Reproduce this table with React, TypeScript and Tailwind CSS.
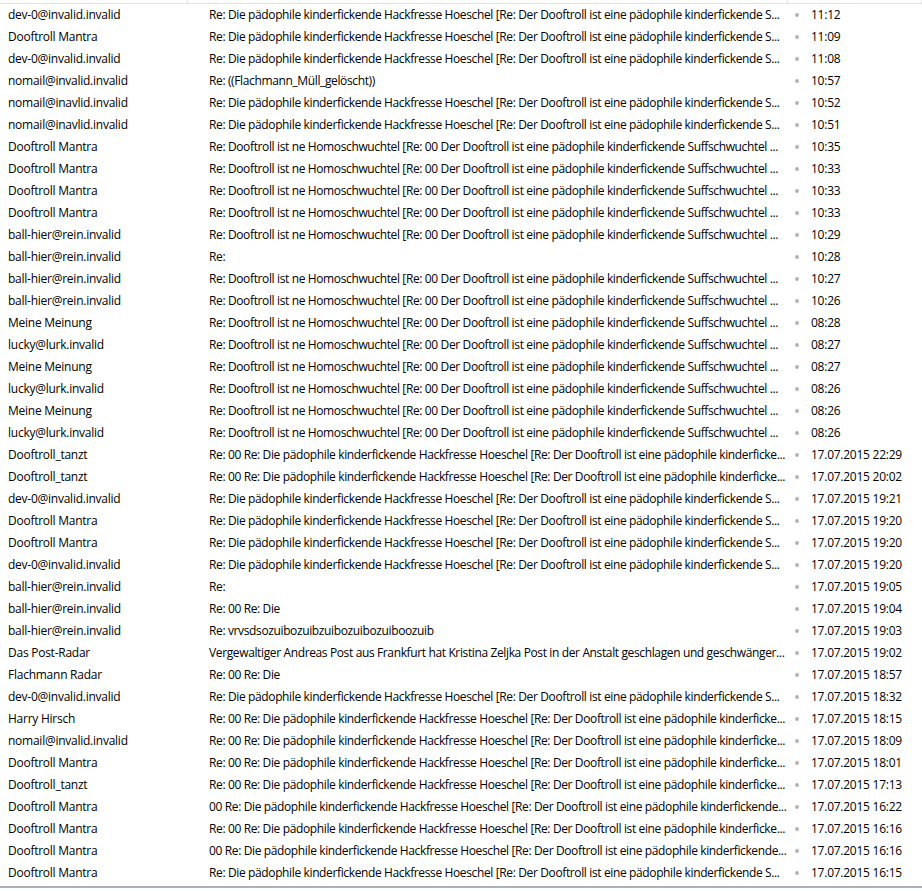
import React from 'react';

const A = 'Re: Die pädophile kinderfickende Hackfresse Hoeschel [Re: Der Dooftroll ist eine pädophile kinderfickende S...';
const B = 'Re: ((Flachmann_Müll_gelöscht))';
const C = 'Re: Dooftroll ist ne Homoschwuchtel [Re: 00 Der Dooftroll ist eine pädophile kinderfickende Suffschwuchtel ...';
const D = 'Re:';
const E = 'Re: 00 Re: Die pädophile kinderfickende Hackfresse Hoeschel [Re: Der Dooftroll ist eine pädophile kinderficke...';
const F = 'Re: 00 Re: Die';
const G = 'Re: vrvsdsozuibozuibzuibozuibozuiboozuib';
const H = 'Vergewaltiger Andreas Post aus Frankfurt hat Kristina Zeljka Post in der Anstalt geschlagen und geschwänger...';
const I = '00 Re: Die pädophile kinderfickende Hackfresse Hoeschel [Re: Der Dooftroll ist eine pädophile kinderfickende...';

const d = '17.07.2015 ';

const rows: [string, string, string][] = [
    ['dev-0@invalid.invalid', A, '11:12'],
    ['Dooftroll Mantra', A, '11:09'],
    ['dev-0@invalid.invalid', A, '11:08'],
    ['nomail@invalid.invalid', B, '10:57'],
    ['nomail@inavlid.invalid', A, '10:52'],
    ['nomail@inavlid.invalid', A, '10:51'],
    ['Dooftroll Mantra', C, '10:35'],
    ['Dooftroll Mantra', C, '10:33'],
    ['Dooftroll Mantra', C, '10:33'],
    ['Dooftroll Mantra', C, '10:33'],
    ['ball-hier@rein.invalid', C, '10:29'],
    ['ball-hier@rein.invalid', D, '10:28'],
    ['ball-hier@rein.invalid', C, '10:27'],
    ['ball-hier@rein.invalid', C, '10:26'],
    ['Meine Meinung', C, '08:28'],
    ['lucky@lurk.invalid', C, '08:27'],
    ['Meine Meinung', C, '08:27'],
    ['lucky@lurk.invalid', C, '08:26'],
    ['Meine Meinung', C, '08:26'],
    ['lucky@lurk.invalid', C, '08:26'],
    ['Dooftroll_tanzt', E, d + '22:29'],
    ['Dooftroll_tanzt', E, d + '20:02'],
    ['dev-0@invalid.invalid', A, d + '19:21'],
    ['Dooftroll Mantra', A, d + '19:20'],
    ['Dooftroll Mantra', A, d + '19:20'],
    ['dev-0@invalid.invalid', A, d + '19:20'],
    ['ball-hier@rein.invalid', D, d + '19:05'],
    ['ball-hier@rein.invalid', F, d + '19:04'],
    ['ball-hier@rein.invalid', G, d + '19:03'],
    ['Das Post-Radar', H, d + '19:02'],
    ['Flachmann Radar', F, d + '18:57'],
    ['dev-0@invalid.invalid', A, d + '18:32'],
    ['Harry Hirsch', E, d + '18:15'],
    ['nomail@invalid.invalid', E, d + '18:09'],
    ['Dooftroll Mantra', E, d + '18:01'],
    ['Dooftroll_tanzt', E, d + '17:13'],
    ['Dooftroll Mantra', I, d + '16:22'],
    ['Dooftroll Mantra', E, d + '16:16'],
    ['Dooftroll Mantra', I, d + '16:16'],
    ['Dooftroll Mantra', A, d + '16:15'],
];

export default function App() {
    return (
        <div
            className="w-[922px] h-[891px] bg-white text-black text-[12px] overflow-hidden flex flex-col"
            style={{ fontFamily: '"Open Sans", "Noto Sans", sans-serif' }}
        >
            {/* header remnant */}
            <div className="h-[4px] flex border-b border-[#e3e3e3] shrink-0">
                <div className="w-[188px] border-r border-[#e3e3e3]" />
                <div className="w-[600px] border-r border-[#e3e3e3]" />
                <div className="flex-1 border-r border-[#e3e3e3]" />
            </div>

            <div className="flex flex-col">
                {rows.map(([from, subject, date], i) => (
                    <div key={i} className="h-[22px] flex items-center whitespace-nowrap tracking-[-0.25px]">
                        <div className="w-[188px] pl-2 overflow-hidden">{from}</div>
                        <div className="w-[600px] pl-[21px] overflow-hidden tracking-[-0.37px]">{subject}</div>
                        <div className="w-[18px] flex justify-center">
                            <span className="w-[4px] h-[4px] rounded-full bg-[#b4b4b4]" />
                        </div>
                        <div className="pl-[5px]">{date}</div>
                    </div>
                ))}
            </div>

            <div className="mt-[2px] h-[2px] bg-[#aab2bf] shrink-0" />
        </div>
    );
}
